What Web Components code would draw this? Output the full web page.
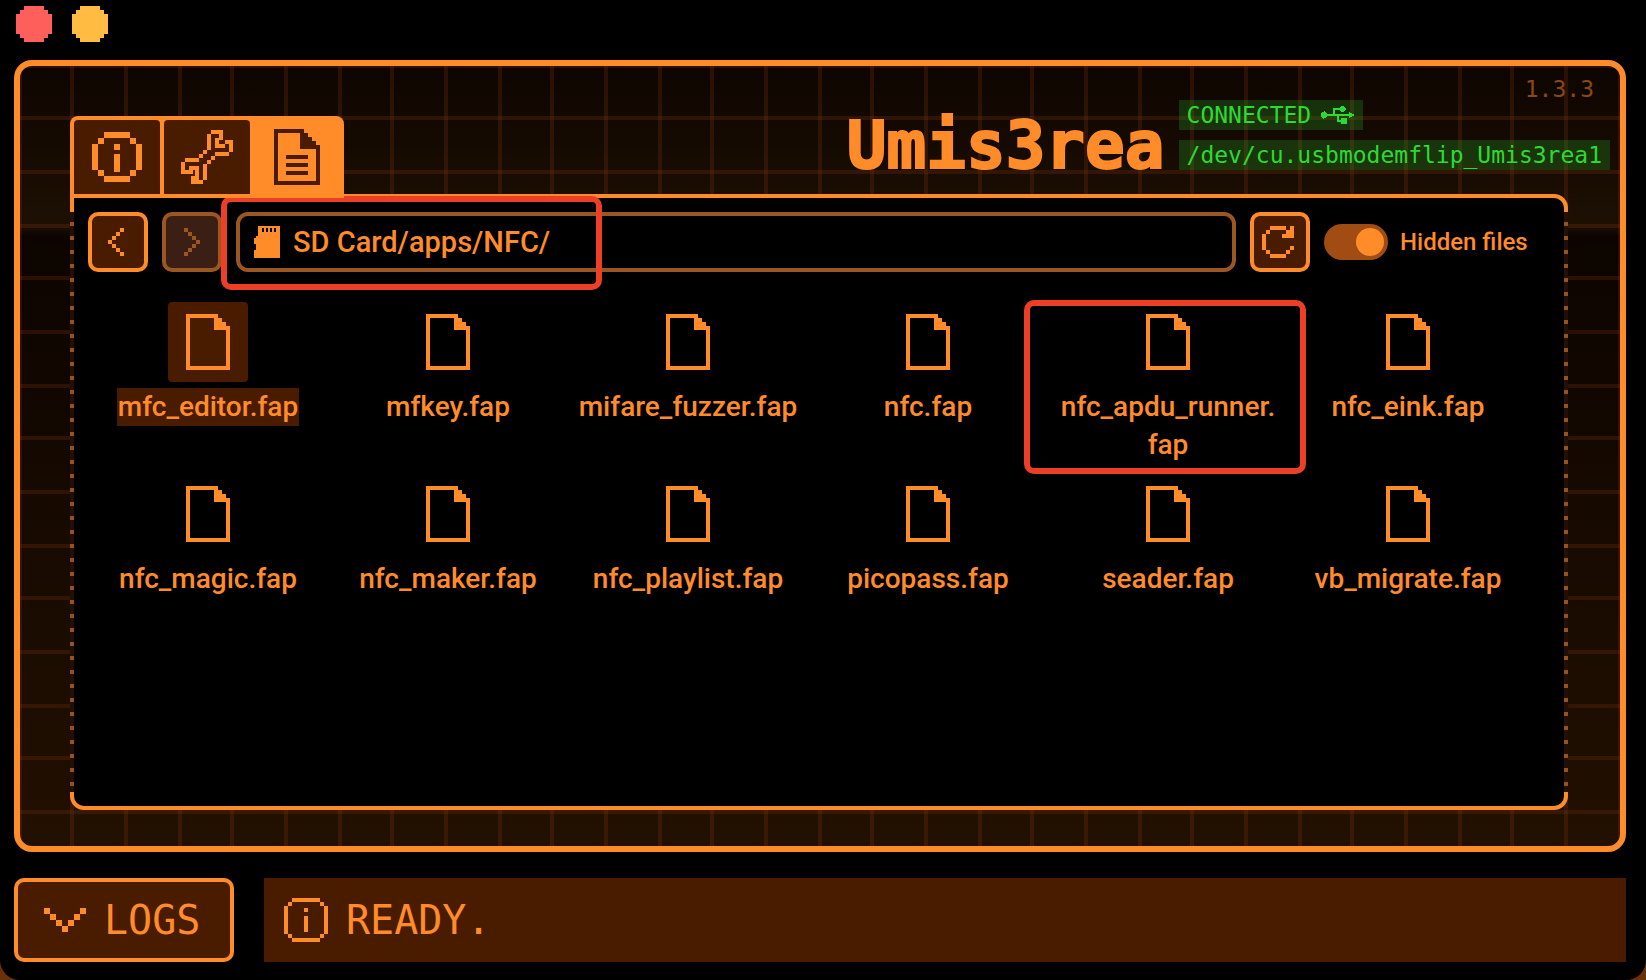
<!DOCTYPE html>
<html lang="en">
<head>
<meta charset="utf-8">
<title>Device file manager</title>
<style>
  html, body { margin: 0; background: #6b3108; }
  body {
    --accent: #ff8b29; --dim: #9c5622; --dark: #491c00; --green: #2cda32; --mark: #ec3f26;
    --ui: Roboto, sans-serif;
    --mono: "DejaVu Sans Mono", monospace;
    color: var(--accent);
    font-family: var(--ui);
  }
</style>
</head>
<body>
<app-window></app-window>
<script>
const define = (name, html, setup) => customElements.define(name, class extends HTMLElement {
  connectedCallback() {
    if (this.shadowRoot) return;
    const t = document.createElement('template');
    t.innerHTML = html;
    const root = this.attachShadow({ mode: 'open' });
    root.append(t.content.cloneNode(true));
    if (setup) setup(this, root);
  }
});

/* Pixel icons: [width, height, path] */
const box = (x, y, w, h) => `M${x} ${y}h${w}v${h}h${-w}z`;
const boxes = list => list.map(b => box(...b)).join('');
const ICONS = {
  info: [50, 50, boxes([[12,0,26,6],[12,44,26,6],[0,12,6,26],[44,12,6,26],[6,6,6,6],[38,6,6,6],[6,38,6,6],[38,38,6,6],[22,12,6,6],[22,22,6,18]])],
  ring: [44, 44, boxes([[8,0,28,4],[8,40,28,4],[0,8,4,28],[40,8,4,28],[4,4,4,4],[36,4,4,4],[4,36,4,4],[36,36,4,4],[20,10,4,4],[20,18,4,16]])],
  wrench: [52, 54, boxes([[30,0,12,4],[26,4,4,16],[38,4,4,6],[34,8,4,10],[34,14,10,4],[44,10,8,4],[40,14,4,4],[48,14,4,8],[34,22,14,4],[30,26,4,4],[26,30,4,4],[22,20,4,4],[18,24,4,4],[4,28,14,4],[0,32,4,12],[4,40,4,4],[8,36,10,4],[8,36,4,8],[14,40,4,6],[10,46,8,4],[10,46,4,8],[14,50,8,4],[22,34,4,16]])],
  doc: [46, 56, boxes([[0,0,30,4],[0,4,4,52],[4,52,42,4],[42,16,4,36],[26,4,4,16],[30,4,4,16],[34,8,4,12],[38,12,4,8],[12,26,22,4],[12,34,22,4],[12,42,22,4]])],
  file: [44, 56, boxes([[0,0,32,4],[0,4,4,52],[4,52,40,4],[40,12,4,40],[28,4,8,12],[36,8,4,8]])],
  back: [20, 28, boxes([[12,0,4,4],[8,4,4,4],[4,8,4,4],[0,12,4,4],[4,16,4,4],[8,20,4,4],[12,24,4,4]])],
  forward: [16, 28, boxes([[0,0,4,4],[4,4,4,4],[8,8,4,4],[12,12,4,4],[8,16,4,4],[4,20,4,4],[0,24,4,4]])],
  reload: [36, 32, boxes([[8,0,16,4],[4,4,4,4],[0,8,4,16],[4,24,4,4],[8,28,16,4],[24,24,4,4],[28,20,4,4],[28,0,4,12],[24,4,4,8],[20,8,4,4]])],
  sd: [26, 32, 'M4 0H26V32H0V24H2V18H0V12H2V10H4zM8 2V6H10V2zM12 2V6H14V2zM16 2V6H18V2zM20 2V6H22V2z'],
  down: [42, 24, boxes([[0,0,6,6],[6,6,6,6],[12,12,6,6],[18,18,6,6],[24,12,6,6],[30,6,6,6],[36,0,6,6]])],
  usb: [34, 18, 'M0 9a3 3 0 0 1 6-1h6V2h7a3 3 0 1 1 0 2h-5v4h14V6l6 3-6 3v-2H18v4h2v-2h6v6h-6v-2h-4v-6H6a3 3 0 0 1-6-1z'],
  dot: [36, 36, 'M8 0H28V4H32V8H36V28H32V32H28V36H8V32H4V28H0V8H4V4H8z']
};
define('px-icon', `<style>:host{display:block;flex:none}svg{display:block;fill:currentColor}</style><svg aria-hidden="true" shape-rendering="crispEdges"><path fill-rule="nonzero"/></svg>`, (host, root) => {
  const name = host.getAttribute('name'), [w, h, d] = ICONS[name];
  const svg = root.querySelector('svg');
  svg.setAttribute('viewBox', `0 0 ${w} ${h}`);
  svg.setAttribute('width', w); svg.setAttribute('height', h);
  const path = svg.querySelector('path');
  path.setAttribute('d', d);
  if (name === 'sd') path.setAttribute('fill-rule', 'evenodd');
});

define('title-bar', `<style>
  :host{display:flex;gap:20px;padding:6px 16px 18px}
  button{all:unset;display:block}
  .close{color:#ff5f5b}.min{color:#ffbb42}
</style>
<button class="close" aria-label="Close"><px-icon name="dot"></px-icon></button>
<button class="min" aria-label="Minimize"><px-icon name="dot"></px-icon></button>`);

define('tab-strip', `<style>
  :host{display:block}
  nav{display:flex;border:4px solid var(--accent);border-right:0;border-radius:8px 8px 0 0;background:var(--accent)}
  button{all:unset;box-sizing:border-box;width:86px;height:74px;display:grid;place-items:center;background:var(--dark);border-radius:4px 4px 0 0}
  button + button{margin-left:4px}
  button.on{width:94px;margin-left:0;background:none;color:var(--dark)}
</style>
<nav aria-label="Sections">
  <button aria-label="Info"><px-icon name="info"></px-icon></button>
  <button aria-label="Tools"><px-icon name="wrench"></px-icon></button>
  <button class="on" aria-label="Files"><px-icon name="doc"></px-icon></button>
</nav>`);

define('device-status', `<style>
  :host{display:flex;flex-direction:column;align-items:flex-start;gap:10px;color:var(--green);font:23px/30px var(--mono)}
  div{display:flex;align-items:center;gap:10px;height:30px;padding:0 8px;background:rgba(44,218,50,.2);white-space:nowrap}
</style>
<div><span>CONNECTED</span><px-icon name="usb"></px-icon></div>
<div><span>/dev/cu.usbmodemflip_Umis3rea1</span></div>`);

define('device-header', `<style>
  :host{display:flex;align-items:flex-end;height:132px;padding:0 10px 0 50px;position:relative;z-index:1;margin-bottom:-4px}
  h1{margin:0 14px 16px auto;font:bold 66px/72px "DejaVu Sans Mono",monospace;white-space:nowrap;-webkit-text-stroke:2px var(--accent)}
  device-status{margin-bottom:28px}
  .ver{position:absolute;top:8px;right:26px;font:23px/30px var(--mono);color:#8a481a}
</style>
<tab-strip></tab-strip>
<h1>Umis3rea</h1>
<device-status></device-status>
<span class="ver">1.3.3</span>`);

define('tool-button', `<style>
  :host{display:block;flex:none}
  button{all:unset;box-sizing:border-box;width:60px;height:60px;border:4px solid var(--accent);border-radius:10px;background:var(--dark);display:grid;place-items:center}
  button:disabled{border-color:var(--dim);background:#3b1f14;color:var(--dim)}
</style><button></button>`, (host, root) => {
  const b = root.querySelector('button'), i = document.createElement('px-icon');
  i.setAttribute('name', host.getAttribute('icon'));
  b.append(i);
  b.disabled = host.hasAttribute('disabled');
  b.setAttribute('aria-label', host.getAttribute('label'));
});

define('path-field', `<style>
  :host{display:block;flex:1;min-width:0;position:relative}
  label{box-sizing:border-box;height:60px;border:4px solid var(--dim);border-radius:12px;display:flex;align-items:center;gap:13px;padding:0 14px}
  input{all:unset;flex:1;min-width:0;font:500 29px/44px var(--ui);color:var(--accent)}
  .mark{position:absolute;top:-16px;left:-15px;width:381px;height:94px;box-sizing:border-box;border:6px solid var(--mark);border-radius:10px;pointer-events:none}
</style>
<label><px-icon name="sd"></px-icon><input aria-label="Path" value="SD Card/apps/NFC/"></label>
<div class="mark"></div>`);

define('hidden-toggle', `<style>
  :host{display:block;flex:none}
  label{display:flex;align-items:center;gap:12px;font:500 24px/36px var(--ui);white-space:nowrap}
  input{appearance:none;box-sizing:border-box;margin:0;width:64px;height:36px;border-radius:18px;background:#a04c13;display:flex;align-items:center;justify-content:flex-end;padding:4px}
  input::before{content:"";width:28px;height:28px;border-radius:50%;background:var(--accent)}
  span{width:128px}
</style><label><input type="checkbox" checked><span>Hidden files</span></label>`);

define('file-tile', `<style>
  :host{display:flex;flex-direction:column;align-items:center;gap:6px;position:relative;min-height:162px}
  .pic{width:80px;height:80px;display:grid;place-items:center;border-radius:4px}
  .name{font:500 28px/38px var(--ui);text-align:center;padding:0 1px}
  :host([selected]) .pic,:host([selected]) .name{background:var(--dark)}
  .mark{display:none}
  :host([marked]) .mark{display:block;position:absolute;inset:-2px -18px -10px -24px;border:6px solid var(--mark);border-radius:10px}
</style>
<div class="pic"><px-icon name="file"></px-icon></div>
<div class="name"><slot></slot></div>
<div class="mark"></div>`);

define('file-browser', `<style>
  :host{display:block;flex:1;box-sizing:border-box;margin:0 52px 36px 50px;border:4px solid var(--accent);border-radius:0 14px 14px 14px;background:#000;padding:14px 36px 14px 14px;position:relative}
  :host::before,:host::after{content:"";position:absolute;top:14px;bottom:14px;width:4px;background:repeating-linear-gradient(#241002 0 10px,#97531f 10px 14px)}
  :host::before{left:-4px}
  :host::after{right:-4px}
  .bar{display:flex;align-items:center;gap:14px}
  .files{display:grid;grid-template-columns:repeat(6,minmax(0,1fr));row-gap:10px;margin-top:30px}
</style>
<div class="bar">
  <tool-button icon="back" label="Back"></tool-button>
  <tool-button icon="forward" label="Forward" disabled></tool-button>
  <path-field></path-field>
  <tool-button icon="reload" label="Reload"></tool-button>
  <hidden-toggle></hidden-toggle>
</div>
<div class="files">
  <file-tile selected>mfc_editor.fap</file-tile>
  <file-tile>mfkey.fap</file-tile>
  <file-tile>mifare_fuzzer.fap</file-tile>
  <file-tile>nfc.fap</file-tile>
  <file-tile marked>nfc_apdu_runner.<wbr>fap</file-tile>
  <file-tile>nfc_eink.fap</file-tile>
  <file-tile>nfc_magic.fap</file-tile>
  <file-tile>nfc_maker.fap</file-tile>
  <file-tile>nfc_playlist.fap</file-tile>
  <file-tile>picopass.fap</file-tile>
  <file-tile>seader.fap</file-tile>
  <file-tile>vb_migrate.fap</file-tile>
</div>`);

define('device-frame', `<style>
  :host{
    --v:rgba(120,50,10,.27);
    display:flex;flex-direction:column;flex:1;margin:0 20px 0 14px;border:6px solid var(--accent);border-radius:18px;
    background:
      linear-gradient(90deg,var(--v) 0 4px,transparent 4px 54px,var(--v) 54px 58px,transparent 58px 108px,var(--v) 108px 112px,transparent 112px) 50px 0/160px 160px,
      linear-gradient(var(--v) 0 4px,transparent 4px 54px,var(--v) 54px 58px,transparent 58px 108px,var(--v) 108px 112px,transparent 112px) 0 50px/160px 160px,
      linear-gradient(#0e0500,#1d1003 160px,#0c0400 170px,#221000)}
</style>
<device-header></device-header>
<file-browser></file-browser>`);

define('status-footer', `<style>
  :host{display:flex;gap:30px;margin:26px 20px 18px 14px;font:40px/48px var(--mono)}
  button{all:unset;box-sizing:border-box;width:220px;height:84px;border:4px solid var(--accent);border-radius:10px;background:var(--dark);display:flex;align-items:center;gap:18px;padding:0 26px}
  .state{flex:1;display:flex;align-items:center;gap:18px;padding:0 20px;background:var(--dark)}
</style>
<button><px-icon name="down"></px-icon><span>LOGS</span></button>
<div class="state" role="status"><px-icon name="ring"></px-icon><span>READY.</span></div>`);

define('app-window', `<style>
  :host{display:flex;flex-direction:column;min-height:100vh;background:#000;border-radius:0 0 20px 20px;overflow:hidden}
</style>
<title-bar></title-bar>
<device-frame></device-frame>
<status-footer></status-footer>`);
</script>
</body>
</html>
